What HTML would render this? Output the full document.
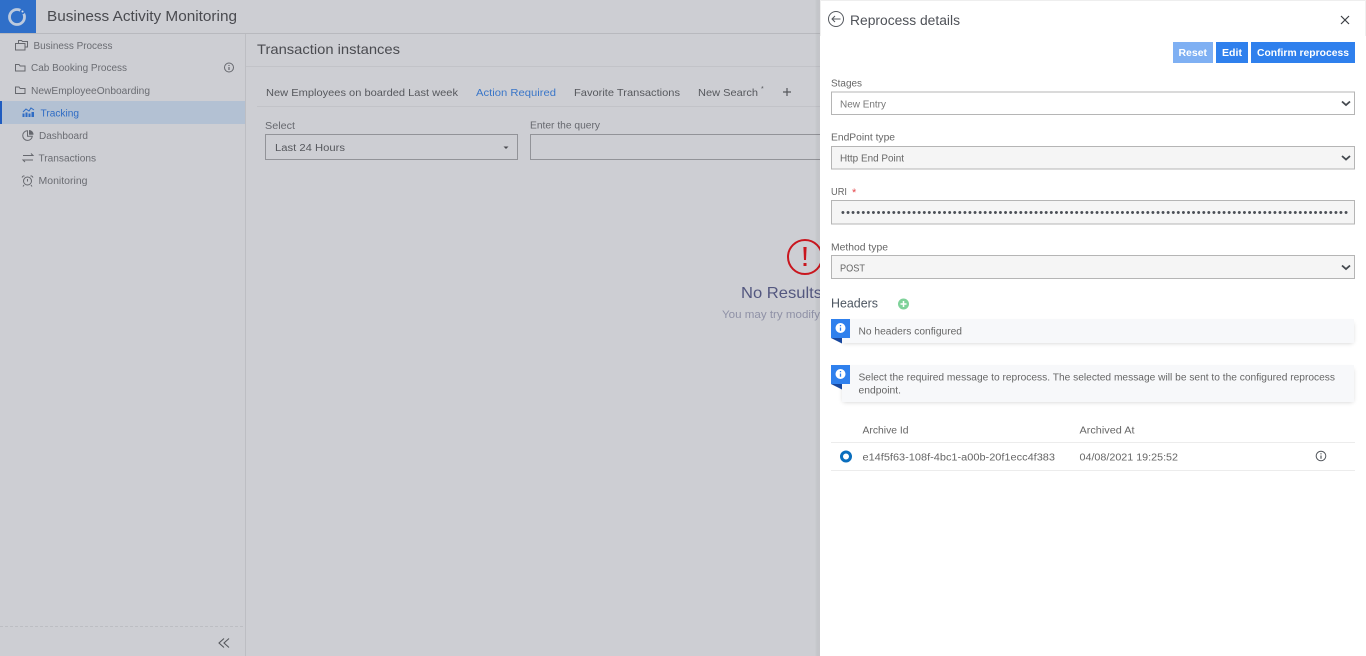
<!DOCTYPE html>
<html lang="en"><head><meta charset="utf-8"><title>Business Activity Monitoring</title>
<style>
html,body{margin:0;padding:0;width:1366px;height:656px;overflow:hidden;background:#cdced3}
svg{display:block;position:absolute;left:0;top:0}
text{font-family:"Liberation Sans",sans-serif;font-size:10px;fill:#6a6c72}
.ic{fill:none;stroke:#66686e;stroke-width:1}
.p text,.pt{fill:#666}
</style></head><body>
<svg width="1366" height="656" viewBox="0 0 1366 656" xmlns="http://www.w3.org/2000/svg">
<defs>
<filter id="ps" x="-5%" y="-5%" width="110%" height="110%"><feGaussianBlur stdDeviation="3"/></filter>
<filter id="cs" x="-5%" y="-30%" width="110%" height="170%"><feGaussianBlur stdDeviation="2.5"/></filter>
</defs>
<rect width="1366" height="656" fill="#cdced3"/>
<!-- top bar -->
<rect x="0" y="0" width="36" height="33" fill="#2f6fc9"/>
<circle cx="17" cy="17" r="7.500" fill="none" stroke="#bccade" stroke-width="2.800"/>
<circle cx="22.500" cy="11.500" r="2.600" fill="#2f6fc9"/>
<circle cx="22.500" cy="11.500" r="1" fill="#d5deeb"/>
<text x="47" y="21" textLength="190" lengthAdjust="spacingAndGlyphs" style="font-size:14.500px;fill:#4a4b50">Business Activity Monitoring</text>
<rect x="0" y="33" width="820" height="1" fill="#b8b9be"/>
<!-- sidebar -->
<rect x="245" y="34" width="1" height="622" fill="#bdbec3"/>
<rect x="0" y="101" width="245" height="23" fill="#b3c1d3"/>
<rect x="0" y="101" width="2" height="23" fill="#1f5cc0"/>
<path class="ic" d="M15.500 43.500h9.500v6.500h-9.500zM18.500 43.500v-3h3l1 1h5v5.500h-3"/>
<text x="33.500" y="49" textLength="79" lengthAdjust="spacingAndGlyphs">Business Process</text>
<path class="ic" d="M15.500 64.500h3.500l1.200 1.500h4.800v5h-9.500z"/>
<text x="31" y="71" textLength="96" lengthAdjust="spacingAndGlyphs">Cab Booking Process</text>
<circle class="ic" cx="229" cy="67.500" r="4.500"/>
<path d="M229 67v3M229 65v1" stroke="#66686e" stroke-width="1.200"/>
<path class="ic" d="M15.500 87h3.500l1.200 1.500h4.800v5h-9.500z"/>
<text x="31" y="94" textLength="119" lengthAdjust="spacingAndGlyphs">NewEmployeeOnboarding</text>
<path d="M23 112l3-3 3 2 2-3 3 2" fill="none" stroke="#2f6cc4" stroke-width="1"/>
<path d="M22.500 113.500h2v3.500h-2zM25.500 112.500h2v4.500h-2zM28.500 113.500h2v3.500h-2zM31.500 112h2.500v5h-2.500z" fill="#2f6cc4"/>
<text x="40.500" y="116.500" textLength="38.500" lengthAdjust="spacingAndGlyphs" style="fill:#2f6cc4">Tracking</text>
<path class="ic" d="M27.500 130.800a4.800 4.800 0 1 0 4.800 5.500h-4.800z"/>
<path d="M29 130v4.800h4.500a4.500 4.500 0 0 0-4.500-4.800z" fill="#66686e"/>
<text x="39" y="139" textLength="49" lengthAdjust="spacingAndGlyphs">Dashboard</text>
<path class="ic" d="M23 155.500h10l-2-2M33 160h-10l2 2"/>
<text x="38.500" y="161.500" textLength="57.500" lengthAdjust="spacingAndGlyphs">Transactions</text>
<circle class="ic" cx="27.500" cy="181" r="4"/>
<path class="ic" d="M27.500 179v2.500M23 176l-1 1.500M32 176l1 1.500M24 185l-1 1.500M31 185l1 1.500M23 176h1.500M32 176h-1.500"/>
<text x="38.500" y="184" textLength="49" lengthAdjust="spacingAndGlyphs">Monitoring</text>
<line x1="0" y1="626.500" x2="245" y2="626.500" stroke="#bdbec3" stroke-dasharray="3 2"/>
<path d="M224 638.500l-5 4.500 5 4.500M229 638.500l-5 4.500 5 4.500" fill="none" stroke="#55575c" stroke-width="1.100"/>
<!-- main -->
<text x="257" y="54" textLength="143" lengthAdjust="spacingAndGlyphs" style="font-size:14px;fill:#4a4b50">Transaction instances</text>
<rect x="246" y="66" width="574" height="1" fill="#c2c3c8"/>
<text x="266" y="96" textLength="192" lengthAdjust="spacingAndGlyphs" style="font-size:10.500px;fill:#56585d">New Employees on boarded Last week</text>
<text x="476" y="96" textLength="80" lengthAdjust="spacingAndGlyphs" style="font-size:10.500px;fill:#3a76c8">Action Required</text>
<text x="574" y="96" textLength="106" lengthAdjust="spacingAndGlyphs" style="font-size:10.500px;fill:#56585d">Favorite Transactions</text>
<text x="698" y="96" textLength="60" lengthAdjust="spacingAndGlyphs" style="font-size:10.500px;fill:#56585d">New Search</text>
<text x="761" y="91" style="font-size:7px;fill:#56585d">*</text>
<path d="M787 88v8M783 92h8" stroke="#55575c" stroke-width="1.200"/>
<rect x="257" y="106" width="563" height="1" fill="#c2c3c8"/>
<text x="265" y="129" textLength="30" lengthAdjust="spacingAndGlyphs" style="fill:#66686e">Select</text>
<rect x="265.500" y="134.500" width="252" height="25" fill="none" stroke="#929398"/>
<text x="275" y="151" textLength="70" lengthAdjust="spacingAndGlyphs" style="fill:#56585d">Last 24 Hours</text>
<path d="M503.500 146.500h5l-2.500 2.500z" fill="#4a4b50"/>
<text x="530" y="128.500" textLength="70" lengthAdjust="spacingAndGlyphs" style="fill:#66686e">Enter the query</text>
<rect x="530.500" y="134.500" width="300" height="25" fill="none" stroke="#929398"/>
<circle cx="805" cy="257" r="17" fill="none" stroke="#c9161e" stroke-width="2"/>
<path d="M803.400 247h3.200l-.6 13h-2z" fill="#c9161e"/>
<rect x="803.500" y="263" width="3" height="3" fill="#c9161e"/>
<text x="741" y="298" textLength="81" lengthAdjust="spacingAndGlyphs" style="font-size:16px;fill:#53577f">No Results</text>
<text x="722" y="318" textLength="98" lengthAdjust="spacingAndGlyphs" style="font-size:11px;fill:#8f91a6">You may try modify</text>
<!-- panel -->
<rect x="816" y="-10" width="8" height="680" fill="#000" opacity=".05" filter="url(#ps)"/>
<g class="p">
<rect x="820" y="0" width="546" height="656" fill="#fff"/>
<rect x="820" y="0" width="546" height="1" fill="#eeeeee"/>
<rect x="820" y="0" width="1" height="36" fill="#f0f0f0"/>
<rect x="1365" y="0" width="1" height="36" fill="#f0f0f0"/>
<circle cx="836" cy="19" r="7.500" fill="none" stroke="#55595f" stroke-width="1"/>
<path d="M840.500 19h-8.500M835 16l-3 3 3 3" fill="none" stroke="#55595f" stroke-width="1"/>
<text x="850" y="25" textLength="110" lengthAdjust="spacingAndGlyphs" style="font-size:13.500px;fill:#4f5258">Reprocess details</text>
<path d="M1341 16l8 8M1349 16l-8 8" stroke="#3c3f44" stroke-width="1.200"/>
<rect x="1173" y="42" width="40" height="21" fill="#7fb0f3"/>
<rect x="1216" y="42" width="32" height="21" fill="#2f80ed"/>
<rect x="1251" y="42" width="104" height="21" fill="#2f80ed"/>
<text x="1178.500" y="56" textLength="28.500" lengthAdjust="spacingAndGlyphs" style="font-size:10.500px;font-weight:700;fill:#fff">Reset</text>
<text x="1222" y="56" textLength="20" lengthAdjust="spacingAndGlyphs" style="font-size:10.500px;font-weight:700;fill:#fff">Edit</text>
<text x="1257" y="56" textLength="92" lengthAdjust="spacingAndGlyphs" style="font-size:10.500px;font-weight:700;fill:#fff">Confirm reprocess</text>

<text x="831" y="86.500" textLength="31" lengthAdjust="spacingAndGlyphs">Stages</text>
<rect x="831.500" y="92" width="523" height="22.500" fill="#fff" stroke="#b5b5b5" stroke-width="1"/>
<text x="840" y="107.500" textLength="46" lengthAdjust="spacingAndGlyphs" style="font-size:10.500px;fill:#777">New Entry</text>
<path d="M1342 101.500l4 3.500 4-3.500" fill="none" stroke="#44494f" stroke-width="1.800"/>

<text x="831" y="140.500" textLength="64" lengthAdjust="spacingAndGlyphs">EndPoint type</text>
<rect x="831.500" y="146.500" width="523" height="22.500" fill="#f5f5f5" stroke="#b5b5b5" stroke-width="1"/>
<text x="840" y="161.500" textLength="64" lengthAdjust="spacingAndGlyphs">Http End Point</text>
<path d="M1342 156l4 3.500 4-3.500" fill="none" stroke="#44494f" stroke-width="1.800"/>

<text x="831" y="195" textLength="16" lengthAdjust="spacingAndGlyphs" style="font-size:10.500px">URI</text>
<text x="852" y="196" style="fill:#e5484d;font-size:11px">*</text>
<rect x="831.500" y="200.500" width="523" height="23.500" fill="#f5f5f5" stroke="#b5b5b5" stroke-width="1"/>
<text x="841" y="216" textLength="505" lengthAdjust="spacing" style="font-size:11px;fill:#4c5057;letter-spacing:-2px">••••••••••••••••••••••••••••••••••••••••••••••••••••••••••••••••••••••••••••••••••••••••••••••••••••</text>

<text x="831" y="250.500" textLength="57" lengthAdjust="spacingAndGlyphs">Method type</text>
<rect x="831.500" y="255.500" width="523" height="23" fill="#f5f5f5" stroke="#b5b5b5" stroke-width="1"/>
<text x="840" y="271.500" textLength="25" lengthAdjust="spacingAndGlyphs" style="font-size:10.500px">POST</text>
<path d="M1342 265.500l4 3.500 4-3.500" fill="none" stroke="#44494f" stroke-width="1.800"/>

<text x="831" y="307.500" textLength="47" lengthAdjust="spacingAndGlyphs" style="font-size:12.500px;fill:#4d5661">Headers</text>
<circle cx="903.500" cy="304" r="5.500" fill="#7fd29a"/>
<path d="M903.500 301v6M900.500 304h6" stroke="#fff" stroke-width="1.500"/>

<rect x="843" y="323" width="510" height="20" fill="#000" opacity=".2" filter="url(#cs)"/>
<rect x="842" y="319" width="512" height="24" fill="#f7f8fa"/>
<path d="M831 338l11 5.500v-5.500z" fill="#17479e"/>
<rect x="831" y="319" width="19" height="19" fill="#2f80ed"/>
<circle cx="840.500" cy="328" r="5" fill="#fff"/>
<path d="M840.500 327.500v3.200M840.500 325v1.300" stroke="#2f80ed" stroke-width="1.300"/>
<text x="858.500" y="334.500" textLength="103.500" lengthAdjust="spacingAndGlyphs">No headers configured</text>

<rect x="843" y="369" width="510" height="33" fill="#000" opacity=".2" filter="url(#cs)"/>
<rect x="842" y="365" width="512" height="37" fill="#f7f8fa"/>
<path d="M831 384l11 5.500v-5.500z" fill="#17479e"/>
<rect x="831" y="365" width="19" height="19" fill="#2f80ed"/>
<circle cx="840.500" cy="374" r="5" fill="#fff"/>
<path d="M840.500 373.500v3.200M840.500 371v1.300" stroke="#2f80ed" stroke-width="1.300"/>
<text x="858.500" y="380.500" textLength="476.500" lengthAdjust="spacingAndGlyphs">Select the required message to reprocess. The selected message will be sent to the configured reprocess</text>
<text x="858.500" y="393.500" textLength="42.500" lengthAdjust="spacingAndGlyphs">endpoint.</text>

<text x="862.500" y="433.500" textLength="46" lengthAdjust="spacingAndGlyphs">Archive Id</text>
<text x="1079.500" y="433.500" textLength="55" lengthAdjust="spacingAndGlyphs">Archived At</text>
<rect x="831" y="442" width="524" height="1" fill="#ececec"/>
<rect x="831" y="470" width="524" height="1" fill="#ececec"/>
<circle cx="846" cy="456.500" r="4.500" fill="#fff" stroke="#0a6ebd" stroke-width="3"/>
<text x="862.500" y="460.500" textLength="192.500" lengthAdjust="spacingAndGlyphs">e14f5f63-108f-4bc1-a00b-20f1ecc4f383</text>
<text x="1079.500" y="460.500" textLength="98.500" lengthAdjust="spacingAndGlyphs">04/08/2021 19:25:52</text>
<circle cx="1321" cy="456" r="4.800" fill="none" stroke="#55595f" stroke-width="1"/>
<path d="M1321 455.500v3.200M1321 453.200v1.200" stroke="#55595f" stroke-width="1.200"/>
</g>
</svg>
</body></html>
